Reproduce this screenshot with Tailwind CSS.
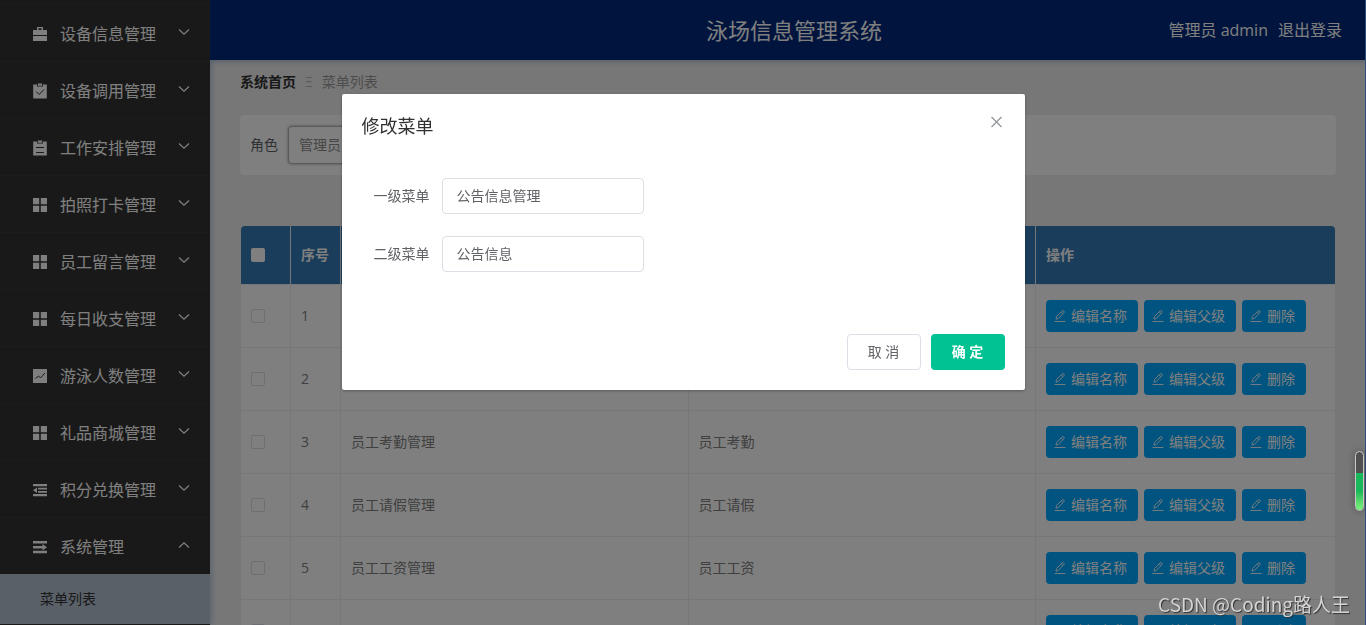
<!DOCTYPE html>
<html lang="zh-CN">
<head>
<meta charset="utf-8">
<title>泳场信息管理系统</title>
<script src="https://cdn.jsdelivr.net/npm/@tailwindcss/browser@4"></script>
</head>
<body class="h-screen overflow-hidden bg-[#eeeeee] font-['Open_Sans','Noto_Sans_CJK_SC',sans-serif] text-sm text-[#606266]">

<svg class="hidden" aria-hidden="true">
  <symbol id="i-case" viewBox="0 0 16 16"><path fill="currentColor" fill-rule="evenodd" d="M5 1h6v3h4v5H1V4h4zM6.500 2.300v1.700h3V2.300zM1 10h14v5H1z"/></symbol>
  <symbol id="i-check" viewBox="0 0 16 16"><path fill="currentColor" d="M1.200 1.500H5v2h6v-2h3.800v14H1.200zM5.800.5h4.400v2.200H5.800z"/><path d="M4.200 8.500l3 3L12 6.500" fill="none" stroke="#333" stroke-width="1"/></symbol>
  <symbol id="i-order" viewBox="0 0 16 16"><path fill="currentColor" d="M1.200 1.500H5v2h6v-2h3.800v14H1.200zM5.800.5h4.400v2.200H5.800z"/><path d="M4 7.500h8M4 12.500h8" fill="none" stroke="#333" stroke-width="1"/></symbol>
  <symbol id="i-grid" viewBox="0 0 16 16"><path fill="currentColor" d="M1 1h6.200v6.200H1zM8.800 1H15v6.200H8.800zM1 8.800h6.200V15H1zM8.800 8.800H15V15H8.800z"/></symbol>
  <symbol id="i-chart" viewBox="0 0 16 16"><path fill="currentColor" d="M1 1h14v14H1z"/><path d="M3.500 10.500l3-2.500 2 2 4.500-5" fill="none" stroke="#333" stroke-width="1"/></symbol>
  <symbol id="i-fold" viewBox="0 0 16 16"><path fill="currentColor" d="M1 2h14v2.300H1zM6 5.700h9v1.800H6zM6 8.900h9v1.800H6zM1 12h14v2.200H1zM1 8.200l4-2.800v5.600z"/></symbol>
  <symbol id="i-unfold" viewBox="0 0 16 16"><path fill="currentColor" d="M1 2h14v2.500H1zM1 6.900h9.500V5l4.500 3.200-4.500 3.200V9.400H1zM1 11.800h14v2.500H1z"/></symbol>
  <symbol id="i-down" viewBox="0 0 12 12"><path d="M1 3.500L6 8.200 11 3.500" fill="none" stroke="currentColor" stroke-width="1.200"/></symbol>
  <symbol id="i-up" viewBox="0 0 12 12"><path d="M1 8.500L6 3.800 11 8.500" fill="none" stroke="currentColor" stroke-width="1.200"/></symbol>
  <symbol id="i-edit" viewBox="0 0 12 12"><path d="M2 9.200l.5-2.700L8.200.9q.7-.6 1.500 0t.2 1.700L4.500 8.300zM7.200 2l1.700 1.600M.5 11.500h11" fill="none" stroke="currentColor" stroke-width=".9"/></symbol>
</svg>

<div class="flex h-full">
  <nav class="relative z-10 w-[210px] shrink-0 overflow-hidden bg-[#333333] text-base text-white shadow-[1px_0_6px_rgba(0,90,170,0.3)]">
    <div class="h-[5px] border-b border-[#3a3a3a]"></div>
    <ul id="menu"></ul>
    <a href="#" class="flex h-[50px] items-center bg-[#b3c0d1] pl-10 text-sm text-[#333]">菜单列表</a>
  </nav>

  <div class="flex min-w-0 flex-1 flex-col">
    <header class="grid h-[60px] shrink-0 grid-cols-[1fr_auto_1fr] items-center bg-[#00287a] pr-6 pl-9 text-base text-white shadow-[0_1px_6px_rgba(0,60,150,0.3)]">
      <span></span>
      <h1 class="text-[22px]">泳场信息管理系统</h1>
      <div class="flex justify-end gap-2.5"><span>管理员 admin</span><a href="#">退出登录</a></div>
    </header>

    <main class="min-h-0 flex-1 overflow-hidden px-[30px] pt-3">
      <div class="flex h-5 items-center">
        <a href="#" class="font-bold text-[#303133]">系统首页</a>
        <span class="mx-[9px] text-[#b8b8b8]">Ξ</span>
        <span class="text-[#999999]">菜单列表</span>
      </div>
      <form class="mt-[23px] flex h-[60px] items-center gap-2.5 rounded bg-white px-2.5">
        <label for="role">角色</label>
        <select id="role" class="h-[38px] w-[200px] appearance-none rounded border border-[#b5b5b5] bg-white px-2.5 text-[#8c8c8c] shadow-[0_0_3px_#999]"><option>管理员</option></select>
      </form>
      <div class="mx-px mt-[51px] overflow-hidden rounded-t">
        <table class="w-full table-fixed border-separate border-spacing-0 bg-white text-left">
          <colgroup><col class="w-[50px]"><col class="w-[50px]"><col><col><col class="w-[299px]"></colgroup>
          <thead>
            <tr class="h-[59px] bg-[#337ab7] text-white *:border-r *:border-b *:border-[#ebeef5] *:px-2.5 *:last:border-r-0">
              <th><input type="checkbox" aria-label="全选" class="block size-3.5 appearance-none rounded-xs bg-white"></th>
              <th>序号</th><th>一级菜单</th><th>二级菜单</th><th>操作</th>
            </tr>
          </thead>
          <tbody id="rows" class="text-[#808080]"></tbody>
        </table>
      </div>
    </main>
  </div>
</div>

<div class="fixed inset-0 z-20 bg-black/50">
  <section role="dialog" aria-labelledby="dlg" class="mx-auto mt-[15vh] w-1/2 rounded-xs bg-white shadow-[0_1px_3px_rgba(0,0,0,0.3)]">
    <div class="flex justify-between px-5 pt-5 pb-2.5">
      <h2 id="dlg" class="text-lg leading-6 text-[#303133]">修改菜单</h2>
      <button type="button" aria-label="关闭" class="size-4 text-[#909399]"><svg viewBox="0 0 16 16" class="size-4"><path d="M2.500 3l10 10M12.500 3L2.500 13" fill="none" stroke="currentColor" stroke-width="1.200"/></svg></button>
    </div>
    <form class="px-5 pt-[30px] pb-[52px]">
      <div class="flex items-center">
        <label for="m1" class="w-20 pr-3 text-right">一级菜单</label>
        <input id="m1" value="公告信息管理" class="h-9 w-[202px] rounded border border-[#dcdfe6] px-3.5 pb-0.5">
      </div>
      <div class="mt-[22px] flex items-center">
        <label for="m2" class="w-20 pr-3 text-right">二级菜单</label>
        <input id="m2" value="公告信息" class="h-9 w-[202px] rounded border border-[#dcdfe6] px-3.5 pb-0.5">
      </div>
    </form>
    <div class="flex justify-end gap-2.5 px-5 pt-2.5 pb-5">
      <button type="button" class="h-9 w-[74px] rounded border border-[#dcdfe6]">取 消</button>
      <button type="button" class="h-9 w-[74px] rounded bg-[#00c292] font-bold text-white">确 定</button>
    </div>
  </section>
</div>

<div class="fixed inset-y-0 right-0 z-30 w-px bg-[#2f4f7f]"></div>
<div class="fixed top-[451px] right-[2px] z-30 flex h-[60px] w-[9px] flex-col justify-end overflow-hidden rounded-full border border-[#c8c8c8] bg-[#505050] shadow-[0_0_8px_rgba(0,0,0,0.3)]">
  <div class="h-[37px] bg-linear-to-b from-[#18b95a] from-50% to-[#7cf57c]"></div>
</div>
<p class="fixed right-4 bottom-1.5 z-30 font-['Noto_Sans_CJK_SC',sans-serif] text-[19px] leading-[30px] text-[#d4d4d4] [text-shadow:1px_1px_1px_#333]">CSDN @Coding路人王</p>

<script>
const menu = [['case','设备信息管理'],['check','设备调用管理'],['order','工作安排管理'],['grid','拍照打卡管理'],['grid','员工留言管理'],['grid','每日收支管理'],['chart','游泳人数管理'],['grid','礼品商城管理'],['fold','积分兑换管理'],['unfold','系统管理']];
document.getElementById('menu').innerHTML = menu.map(([icon, name], i) => `
  <li class="border-b border-[#3a3a3a] last:border-b-0">
    <button type="button" class="flex h-14 w-full items-center pr-5 pl-8">
      <svg class="mt-0.5 mr-3 size-4"><use href="#i-${icon}"/></svg>
      <span class="mt-0.5">${name}</span>
      <svg class="mb-0.5 ml-auto size-3"><use href="#i-${i === 9 ? 'up' : 'down'}"/></svg>
    </button>
  </li>`).join('');
const rows = [['公告信息管理','公告信息'],['',''],['员工考勤管理','员工考勤'],['员工请假管理','员工请假'],['员工工资管理','员工工资'],['','']];
const btn = t => `<button type="button" class="flex h-8 items-center gap-[5px] rounded bg-[#00a8ff] pr-[11px] pl-2 text-white"><svg class="size-3"><use href="#i-edit"/></svg>${t}</button>`;
document.getElementById('rows').innerHTML = rows.map(([a, b], i) => `
  <tr class="h-[63px] *:border-r *:border-b *:border-[#ebeef5] *:px-2.5 *:last:border-r-0">
    <td><input type="checkbox" aria-label="选择第${i + 1}行" class="block size-3.5 appearance-none rounded-xs border border-[#dcdfe6]"></td>
    <td>${i + 1}</td><td>${a}</td><td>${b}</td>
    <td><div class="flex gap-1.5">${btn('编辑名称')}${btn('编辑父级')}${btn('删除')}</div></td>
  </tr>`).join('');
</script>
</body>
</html>
